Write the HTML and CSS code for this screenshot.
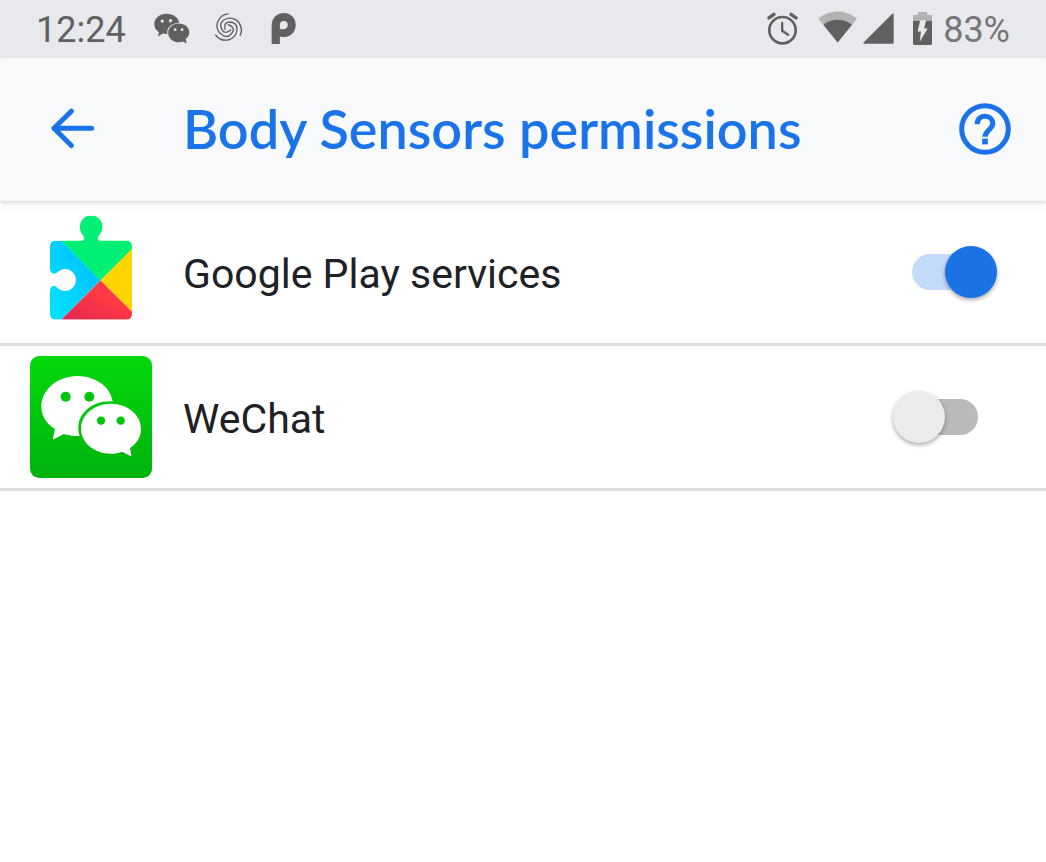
FILE: index.html
```html
<!DOCTYPE html>
<html lang="en">
<head>
<meta charset="utf-8">
<meta name="viewport" content="width=device-width, initial-scale=1">
<title>Body Sensors permissions</title>
<link rel="stylesheet" href="styles.css">
</head>
<body>
<div class="status-bar">
  <div class="status-left">
    <span class="clock">12:24</span>
    <svg class="notif-chat" viewBox="403 37 109 93" aria-hidden="true">
      <path fill="#5f6062" d="M441 39c21 0 37 13 38 27-20 0-36 13-36 29 0 2 0 4 1 5-5 0-10 0-14-1l-15 9 3-13c-9-6-14-15-14-25 0-17 16-31 37-31z"/>
      <path fill="#5f6062" d="M478 68c18 0 32 12 32 27 0 8-4 15-11 20l3 14-12-6c-4 1-8 2-12 2-18 0-32-13-32-29s14-28 32-28z"/>
      <g fill="#e8e9ec"><circle cx="428" cy="61" r="5"/><circle cx="453" cy="60" r="5"/><circle cx="467" cy="87" r="4"/><circle cx="488" cy="87" r="4"/></g>
    </svg>
    <svg class="notif-swirl" viewBox="-45 -45 90 90" fill="none" stroke="#5f6062" stroke-linecap="round" aria-hidden="true">
      <defs><path id="arm" d="M-9 4C-12-8-8-18 3-18 17-18 27-12 27 3 27 20 15 34 0 36-14 38-28 34-37 21"/></defs>
      <g stroke-width="4">
        <use href="#arm"/>
        <use href="#arm" transform="rotate(120)"/>
        <use href="#arm" transform="rotate(240)"/>
      </g>
    </svg>
    <svg class="notif-p" viewBox="755 37 74 94" aria-hidden="true">
      <path fill="#5f6062" fill-rule="evenodd" d="M756 131V76c0-23 15-39 37-39 21 0 36 15 36 36 0 22-15 37-35 37-5 0-9-1-13-2v23zM781 86h11c8 0 13-5 13-13s-5-12-12-12-12 5-12 12z"/>
    </svg>
  </div>
  <div class="status-right">
    <svg class="alarm" viewBox="50 33 94 98" fill="none" stroke="#5f6062" aria-hidden="true">
      <circle cx="97" cy="87" r="40" stroke-width="8"/>
      <path stroke-width="7" stroke-linecap="round" d="M96 65v24l18 12"/>
      <path stroke-width="10" stroke-linecap="round" d="M56 50l15-11M138 50l-15-11"/>
    </svg>
    <svg class="wifi" viewBox="203 32 117 95" aria-hidden="true">
      <path fill="#b2b3b5" d="M204 55c34-29 82-29 116 0l-58 71z"/>
      <path fill="#5f6062" d="M219 73c25-20 61-20 86 0l-43 53z"/>
    </svg>
    <svg class="signal" viewBox="338 38 94 94" aria-hidden="true">
      <path fill="#5f6062" stroke="#5f6062" stroke-width="4" stroke-linejoin="round" d="M429 41v88h-88z"/>
    </svg>
    <svg class="battery" viewBox="488 32 58 100" aria-hidden="true">
      <path fill="#b2b3b5" d="M503 32h28v9h15v17h-58V41h15z"/>
      <path fill="#5f6062" d="M488 58h58v70q0 4-4 4h-50q-4 0-4-4z"/>
      <path fill="#e8e9ec" d="M510 57h18l-6 25h11l-24 40 3-31h-10z"/>
    </svg>
    <span class="battery-level">83%</span>
  </div>
</div>
<header class="app-bar">
  <button class="icon-button" type="button" aria-label="Back">
    <svg class="back-icon" viewBox="60 57 135 122" fill="none" stroke="#1a73e8" stroke-width="15" stroke-linecap="round" stroke-linejoin="round" aria-hidden="true">
      <path d="M185 117.500H72M124 66l-52 51.500 52 51.500"/>
    </svg>
  </button>
  <h1 class="title">Body Sensors permissions</h1>
  <button class="icon-button" type="button" aria-label="Help">
    <svg class="help-icon" viewBox="58 41 154 154" fill="none" stroke="#1a73e8" aria-hidden="true">
      <circle cx="135" cy="118" r="69" stroke-width="15"/>
      <path stroke-width="15" d="M112 104c0-15 9-24 23-24s23 9 23 22c0 17-23 20-23 39"/>
      <path stroke-width="17" d="M126.500 155h17"/>
    </svg>
  </button>
</header>
<main>
  <ul class="app-list">
    <li class="app-row">
      <span class="app-icon">
        <svg class="play-icon" viewBox="90 31 247 315" aria-hidden="true">
          <defs>
            <clipPath id="puzzle"><path d="M108 108h76c8 0 12-7 7-14-7-8-11-17-11-28a34 34 0 0 1 68 0c0 11-5 20-12 28-5 7-1 14 7 14h76q18 0 18 18v202q0 18-18 18H108q-18 0-18-18v-65c0-20 13-23 22-13 7 6 15 9 23 9a33 33 0 0 0 0-66c-8 0-15 3-22 9-9 8-23 7-23-12v-64q0-18 18-18z"/></clipPath>
            <linearGradient id="blue" x1="0" y1="1" x2="1" y2="0"><stop offset="0" stop-color="#00e5ff"/><stop offset="1" stop-color="#00b8ff"/></linearGradient>
            <linearGradient id="red" x1="0" y1="1" x2="1" y2="0"><stop offset="0" stop-color="#e0244f"/><stop offset=".6" stop-color="#ff3a44"/></linearGradient>
          </defs>
          <g clip-path="url(#puzzle)">
            <path fill="url(#blue)" d="M90 108h34l118 119-118 119H90z"/>
            <path fill="#00f076" d="M124 108V31h213v103l-95 94z"/>
            <path fill="#ffd400" d="M337 132v190l-95-94z"/>
            <path fill="url(#red)" d="M124 346l118-118 95 94v24z"/>
          </g>
        </svg>
      </span>
      <label class="app-name" for="play-switch">Google Play services</label>
      <input class="switch" id="play-switch" type="checkbox" role="switch" checked>
    </li>
    <li class="app-row">
      <span class="app-icon">
        <svg class="wechat-icon" viewBox="31 33 366 366" aria-hidden="true">
          <defs><linearGradient id="green" x1="0" y1="0" x2="0" y2="1"><stop offset="0" stop-color="#02da0d"/><stop offset="1" stop-color="#00b20b"/></linearGradient></defs>
          <rect x="31" y="33" width="366" height="366" rx="28" fill="url(#green)"/>
          <path fill="#fff" d="M173 93c55 0 100 33 106 76-58-4-103 33-103 79 0 9 1 17 4 25-15 1-32-2-48-6l-28 15q-5 3-4-3l6-27c-25-16-41-39-41-67 0-50 48-92 108-92z"/>
          <path fill="#fff" d="M274 176c50 0 90 34 90 75 0 24-12 44-33 58l4 22q1 4-4 1l-24-12c-10 4-21 6-33 6-50 0-90-33-90-75s40-75 90-75z"/>
          <g fill="#00c50c"><circle cx="138" cy="155" r="15"/><circle cx="209" cy="155" r="15"/><circle cx="244" cy="227" r="12.500"/><circle cx="303" cy="227" r="12.500"/></g>
        </svg>
      </span>
      <label class="app-name" for="wechat-switch">WeChat</label>
      <input class="switch" id="wechat-switch" type="checkbox" role="switch">
    </li>
  </ul>
</main>
</body>
</html>
```
FILE: styles.css
```css
* {
  box-sizing: border-box;
}

body {
  margin: 0;
  background: #fff;
  color: #202124;
  font-family: Roboto, sans-serif;
}

svg {
  display: block;
  flex: none;
}

.status-bar {
  display: flex;
  align-items: center;
  justify-content: space-between;
  height: 58px;
  padding: 0 36px 2px;
  background: #e8e9ec;
  font-size: 36px;
  line-height: 42px;
}

.status-left,
.status-right {
  display: flex;
  align-items: center;
}

.clock,
.battery-level {
  padding-top: 4px;
}

.clock {
  color: #5f6062;
  margin-right: 28px;
}

.battery-level {
  color: #757678;
}

.notif-chat {
  width: 36px;
  height: 31px;
  margin-right: 23px;
}

.notif-swirl {
  width: 30px;
  height: 30px;
  margin-right: 28px;
}

.notif-p {
  width: 25px;
  height: 31px;
}

.alarm {
  width: 31px;
  height: 33px;
  margin-right: 20px;
}

.wifi {
  width: 39px;
  height: 32px;
  margin: 0 6px 2px 0;
}

.signal {
  width: 31px;
  height: 31px;
  margin-right: 19px;
}

.battery {
  width: 19px;
  height: 33px;
  margin-right: 11px;
}

.app-bar {
  position: relative;
  display: flex;
  align-items: center;
  height: 143px;
  padding: 0 35px 2px 50px;
  background: #f7f9fa;
  box-shadow: 0 2px 2px #e3e4e6, 0 4px 10px rgba(0, 0, 0, 0.06);
}

.icon-button {
  flex: none;
  padding: 0;
  border: 0;
  background: none;
  cursor: pointer;
}

.back-icon {
  width: 45px;
  height: 41px;
}

.help-icon {
  width: 52px;
  height: 52px;
}

.title {
  flex: 1;
  margin: 0 0 0 88px;
  color: #1a73e8;
  font-family: Lato, sans-serif;
  font-size: 54px;
  font-weight: 600;
  line-height: 60px;
}

.app-list {
  margin: 0;
  padding: 0;
  list-style: none;
}

.app-row {
  display: flex;
  align-items: center;
  min-height: 145px;
  padding: 0 49px 0 30px;
  border-bottom: 3px solid #dedede;
}

.app-icon {
  display: grid;
  flex: none;
  justify-items: center;
  width: 122px;
}

.play-icon {
  width: 82px;
  height: 105px;
  margin-bottom: 10px;
}

.wechat-icon {
  width: 122px;
  height: 122px;
}

.app-name {
  flex: 1;
  margin-left: 31px;
  padding-top: 4px;
  font-size: 41px;
  line-height: 48px;
}

.switch {
  display: grid;
  flex: none;
  align-items: center;
  width: 104px;
  height: 52px;
  margin: 0;
  appearance: none;
  cursor: pointer;
}

.switch::before,
.switch::after {
  grid-area: 1 / 1;
  content: "";
}

.switch::before {
  justify-self: center;
  width: 66px;
  height: 36px;
  border-radius: 18px;
  background: #bababa;
}

.switch::after {
  justify-self: start;
  width: 52px;
  height: 52px;
  border-radius: 50%;
  background: #ebebeb;
  box-shadow: 0 2px 4px rgba(0, 0, 0, 0.35);
}

.switch:checked::before {
  background: #c4daf9;
}

.switch:checked::after {
  justify-self: end;
  background: #1a73e4;
}
```
